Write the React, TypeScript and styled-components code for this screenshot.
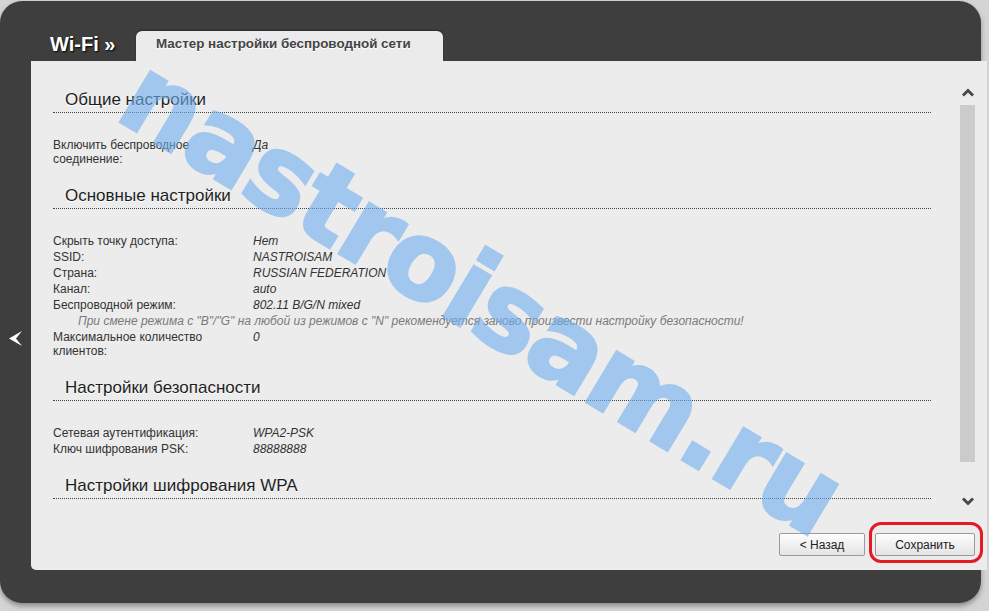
import React from 'react';
import styled, { createGlobalStyle } from 'styled-components';

const GlobalStyle = createGlobalStyle`
  html, body {
    margin: 0;
    padding: 0;
    background: #d4d4d4;
  }
  body {
    font-family: "Liberation Sans", Arial, sans-serif;
    width: 989px;
    height: 611px;
    overflow: hidden;
  }
`;

const Page = styled.div`
  position: relative;
  width: 989px;
  height: 611px;
  padding-top: 1px;
  box-sizing: border-box;
`;

const Frame = styled.div`
  width: 981px;
  height: 602px;
  background: #3e3e3e;
  border-radius: 22px;
  box-shadow: 0 3px 5px rgba(0, 0, 0, 0.35);
  display: grid;
  grid-template-columns: 31px 950px;
  grid-template-rows: 30px 30px 509px;
`;

const TopBar = styled.div`
  grid-column: 2;
  grid-row: 2;
  display: flex;
`;

const Title = styled.div`
  width: 105px;
  padding-left: 19px;
  box-sizing: border-box;
  color: #fff;
  font-weight: bold;
  font-size: 20px;
  line-height: 26px;
  text-shadow: 1px 1px 2px #000;
  white-space: nowrap;
`;

const Tab = styled.div`
  width: 307px;
  padding-left: 20px;
  box-sizing: border-box;
  background: #ebebeb;
  border-radius: 6px 6px 0 0;
  box-shadow: 0 -1px 2px rgba(0, 0, 0, 0.3);
  color: #444;
  font-weight: bold;
  font-size: 13.4px;
  line-height: 26px;
  text-shadow: 0 1px 0 #fff;
  white-space: nowrap;
`;

const Gutter = styled.div`
  grid-column: 1;
  grid-row: 3;
  display: flex;
  justify-content: center;
  padding-top: 270px;
`;

const Panel = styled.div`
  grid-column: 2;
  grid-row: 3;
  width: 956px;
  box-sizing: border-box;
  background: #ececec;
  border-radius: 0 0 0 5px;
  padding: 0 12px 0 22px;
  display: grid;
  grid-template-columns: 878px 15px;
  grid-template-rows: 456px 53px;
  column-gap: 29px;
`;

const Content = styled.div`
  overflow: hidden;
  padding-top: 29px;
`;

const SectionHeader = styled.div<{ $first?: boolean }>`
  margin-top: ${({ $first }) => ($first ? '0' : '19px')};
  padding: 0 0 2px 12px;
  font-size: 17px;
  line-height: 20px;
  color: #1e1e1e;
  border-bottom: 1px dotted #444;
  text-shadow: 0 1px 0 #fff;
`;

const Rows = styled.div`
  padding-top: 24px;
`;

const Row = styled.div`
  display: grid;
  grid-template-columns: 200px 1fr;
  padding: 1px 0;
  font-size: 12px;
  line-height: 14px;
  color: #333;
`;

const Label = styled.div`
  padding-right: 20px;
`;

const Value = styled.div`
  font-style: italic;
`;

const Note = styled.div`
  padding: 1px 0 1px 25px;
  font-size: 12px;
  line-height: 14px;
  font-style: italic;
  color: #7a7a7a;
  white-space: nowrap;
`;

const Scroll = styled.div`
  display: flex;
  flex-direction: column;
  align-items: center;
  padding-top: 25px;
`;

const Track = styled.div`
  width: 15px;
  height: 357px;
  margin: 5px 0 32px;
  background: #cbcbcb;
`;

const Footer = styled.div`
  grid-column: 1 / -1;
  display: flex;
  justify-content: flex-end;
  align-items: flex-start;
  gap: 10px;
  padding-top: 16px;
`;

const Button = styled.button<{ $width: number }>`
  width: ${({ $width }) => $width}px;
  height: 23px;
  padding: 0;
  border: 1px solid #9a9a9a;
  border-radius: 2px;
  background: linear-gradient(#fdfdfd, #e4e4e4);
  font-family: "Liberation Sans", Arial, sans-serif;
  font-size: 12px;
  color: #222;
`;

const Highlight = styled.div`
  position: relative;
  &::after {
    content: '';
    position: absolute;
    top: -11px;
    left: -6px;
    right: -8px;
    bottom: -7px;
    border: 3px solid #e51b23;
    border-radius: 12px;
    pointer-events: none;
  }
`;

const Watermark = styled.div`
  position: absolute;
  left: 482px;
  top: 296px;
  transform: translate(-50%, -50%) rotate(31deg);
  font-family: "DejaVu Sans", Verdana, sans-serif;
  font-weight: bold;
  font-size: 107px;
  letter-spacing: -2px;
  color: rgb(112, 176, 240);
  -webkit-text-stroke: 3px rgb(112, 176, 240);
  opacity: 0.6;
  white-space: nowrap;
  pointer-events: none;
`;

const Chevron = ({ down }: { down?: boolean }) => (
  <svg width="14" height="14" viewBox="0 0 14 14">
    <polyline
      points={down ? '2,4.5 7,9.5 12,4.5' : '2,9.5 7,4.5 12,9.5'}
      fill="none"
      stroke="#4a4a4a"
      strokeWidth="3"
    />
  </svg>
);

const BackArrow = () => (
  <svg width="14" height="15" viewBox="0 0 14 15">
    <polygon points="0,7.5 13,0 7,7.5 13,15" fill="#fff" />
  </svg>
);

type Item = { label: string; value: string };

const general: Item[] = [{ label: 'Включить беспроводное соединение:', value: 'Да' }];

const basic: Item[] = [
  { label: 'Скрыть точку доступа:', value: 'Нет' },
  { label: 'SSID:', value: 'NASTROISAM' },
  { label: 'Страна:', value: 'RUSSIAN FEDERATION' },
  { label: 'Канал:', value: 'auto' },
  { label: 'Беспроводной режим:', value: '802.11 B/G/N mixed' },
];

const security: Item[] = [
  { label: 'Сетевая аутентификация:', value: 'WPA2-PSK' },
  { label: 'Ключ шифрования PSK:', value: '88888888' },
];

const renderRows = (items: Item[]) =>
  items.map((it) => (
    <Row key={it.label}>
      <Label>{it.label}</Label>
      <Value>{it.value}</Value>
    </Row>
  ));

export default function App() {
  return (
    <Page>
      <GlobalStyle />
      <Frame>
        <TopBar>
          <Title>Wi-Fi »</Title>
          <Tab>Мастер настройки беспроводной сети</Tab>
        </TopBar>
        <Gutter>
          <BackArrow />
        </Gutter>
        <Panel>
          <Content>
            <SectionHeader $first>Общие настройки</SectionHeader>
            <Rows>{renderRows(general)}</Rows>

            <SectionHeader>Основные настройки</SectionHeader>
            <Rows>
              {renderRows(basic)}
              <Note>
                При смене режима с "B"/"G" на любой из режимов с "N" рекомендуется заново произвести настройку
                безопасности!
              </Note>
              <Row>
                <Label>Максимальное количество клиентов:</Label>
                <Value>0</Value>
              </Row>
            </Rows>

            <SectionHeader>Настройки безопасности</SectionHeader>
            <Rows>{renderRows(security)}</Rows>

            <SectionHeader>Настройки шифрования WPA</SectionHeader>
          </Content>
          <Scroll>
            <Chevron />
            <Track />
            <Chevron down />
          </Scroll>
          <Footer>
            <Button $width={86}>&lt; Назад</Button>
            <Highlight>
              <Button $width={100}>Сохранить</Button>
            </Highlight>
          </Footer>
        </Panel>
      </Frame>
      <Watermark>nastroisam.ru</Watermark>
    </Page>
  );
}
